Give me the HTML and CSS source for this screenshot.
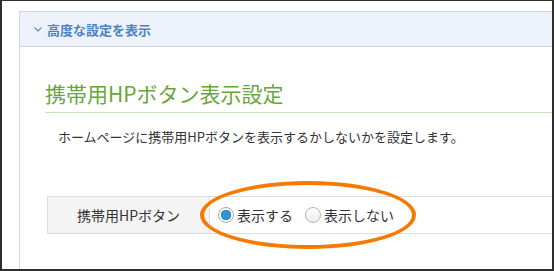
FILE: index.html
```html
<!DOCTYPE html>
<html lang="ja">
<head>
    <meta charset="UTF-8">
    <meta name="viewport" content="width=device-width, initial-scale=1.0">
    <title>携帯用HPボタン表示設定</title>
    <link rel="stylesheet" href="styles.css">
</head>
<body>
    <div class="frame">
        <div class="panel">
            <div class="panel-header">
                <svg class="chevron" width="8" height="5" viewBox="0 0 8 5">
                    <path d="M0.5 0.5 L4 4 L7.5 0.5" fill="none" stroke="#5a8fcb" stroke-width="1.2"/>
                </svg>
                <span>高度な設定を表示</span>
            </div>
            <div class="panel-body">
                <h2 class="section-title">携帯用HPボタン表示設定</h2>
                <p class="section-desc">ホームページに携帯用HPボタンを表示するかしないかを設定します。</p>
                <div class="setting-row">
                    <div class="setting-label">携帯用HPボタン</div>
                    <div class="setting-value">
                        <label class="radio-item">
                            <input type="radio" name="mobileButton" value="show" checked>
                            <span>表示する</span>
                        </label>
                        <label class="radio-item">
                            <input type="radio" name="mobileButton" value="hide">
                            <span>表示しない</span>
                        </label>
                    </div>
                </div>
            </div>
        </div>
        <!-- 注目の囲み -->
        <div class="highlight"></div>
    </div>
</body>
</html>
```

FILE: styles.css
```css
        body {
            margin: 0;
            padding: 0;
            font-family: "Noto Sans CJK JP", "Noto Sans", sans-serif;
            color: #333333;
            background-color: #ffffff;
        }
        .frame {
            position: relative;
            width: 554px;
            height: 271px;
            box-sizing: border-box;
            border: 2px solid #2e2e2e;
            border-top-width: 1px;
            overflow: hidden;
        }
        .panel {
            margin: 10px 0 0 17px;
            border-top: 1px solid #cdd6e2;
            border-left: 1px solid #cdd6e2;
            height: 300px;
        }
        .panel-header {
            display: flex;
            align-items: center;
            height: 34px;
            padding-left: 14px;
            background-color: #edf2fa;
            border-bottom: 1px solid #cdd6e2;
            color: #4b83c2;
            font-size: 13px;
            font-weight: bold;
        }
        .chevron {
            margin-right: 5px;
            margin-top: 1px;
        }
        .panel-body {
            background-color: #ffffff;
        }
        .section-title {
            margin: 32px 0 0 25px;
            padding-bottom: 5px;
            font-size: 21px;
            line-height: 28px;
            font-weight: normal;
            color: #69a63a;
            border-bottom: 1px solid #c9e1b6;
        }
        .section-desc {
            margin: 14px 0 0 38px;
            font-size: 13px;
            line-height: 20px;
        }
        .setting-row {
            display: flex;
            margin: 49px 0 0 27px;
            height: 38px;
            box-sizing: border-box;
            border-top: 1px solid #dddddd;
            border-bottom: 1px solid #dddddd;
        }
        .setting-label {
            display: flex;
            align-items: center;
            justify-content: center;
            width: 161px;
            background-color: #f4f4f4;
            border-left: 1px solid #dddddd;
            border-right: 1px solid #dddddd;
            font-size: 14px;
        }
        .setting-value {
            display: flex;
            align-items: center;
            gap: 12px;
            padding-left: 8px;
            font-size: 14px;
        }
        .radio-item {
            display: flex;
            align-items: center;
            gap: 3px;
        }
        .radio-item input {
            appearance: none;
            -webkit-appearance: none;
            margin: 0;
            width: 16px;
            height: 16px;
            border-radius: 50%;
            border: 1px solid #b5b5b5;
            background: linear-gradient(#ffffff, #ececec);
            box-sizing: border-box;
        }
        .radio-item input:checked {
            background: radial-gradient(circle, #2f93d8 0, #2f93d8 5px, #ffffff 5.5px);
            border-color: #a8a8a8;
        }
        .highlight {
            position: absolute;
            left: 198px;
            top: 180px;
            width: 216px;
            height: 68px;
            box-sizing: border-box;
            border: 4px solid #f67a00;
            border-radius: 50%;
        }
```
